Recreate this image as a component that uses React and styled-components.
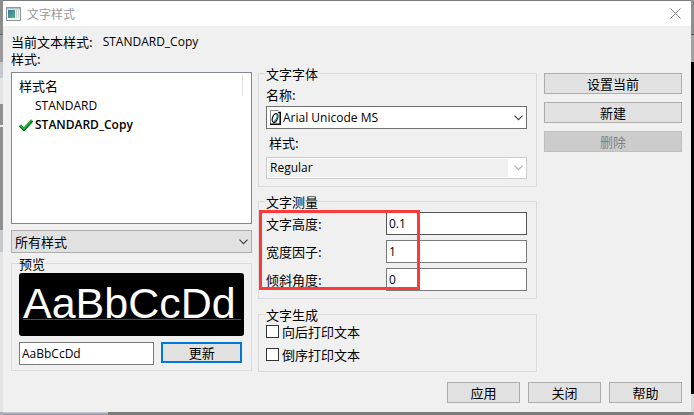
import React, { useState } from "react";
import styled, { createGlobalStyle } from "styled-components";

const GlobalStyle = createGlobalStyle`
  * {
    box-sizing: border-box;
  }
  body {
    margin: 0;
    font-family: "Open Sans", "Noto Sans CJK SC", sans-serif;
    font-size: 12px;
    line-height: 17px;
    color: #000;
  }
  :lang(zh) {
    font-family: "Noto Sans CJK SC", sans-serif;
    font-size: 13px;
  }
  button, input, select {
    font: inherit;
    color: inherit;
    margin: 0;
  }
`;

const Desktop = styled.div`
  min-height: 100vh;
  padding: 1px 3px 3px;
  background:
    linear-gradient(#8f8f8f 0 34px, #555 34px 35px, #a3a3a3 35px 62px, #000 62px 394px, #d8d8d8 394px 412px, #8a8a8a 412px) right / 3px 100% no-repeat,
    linear-gradient(#8c8c8c 0 34px, #666 34px 35px, #9a9a9a 35px 62px, #c4c8cc 62px 78px, #e4e4e4 78px 104px, #8f8f8f 104px 125px, #eee 125px 127px, #8f8f8f 127px 230px, #c4c8cc 230px 252px, #e4e4e4 252px 412px, #a8adb8 412px) left / 3px 100% no-repeat,
    linear-gradient(#d0d0d8, #8a8c98) left bottom / 108px 3px no-repeat,
    #7c7c7c;
`;

const Dialog = styled.main`
  display: flex;
  flex-direction: column;
  min-height: calc(100vh - 4px);
  background: #f0f0f0;
`;

const TitleBar = styled.header`
  display: flex;
  align-items: center;
  gap: 6px;
  height: 25px;
  padding: 0 10px 0 3px;
  background: #fff;
  color: #999;
`;

const Title = styled.h1`
  flex: 1;
  margin: 0;
  font-size: 12px;
  font-weight: 400;
`;

const CloseButton = styled.button`
  display: flex;
  padding: 0;
  border: none;
  background: none;
`;

const Content = styled.div`
  flex: 1;
  display: flex;
  flex-direction: column;
  padding: 7px 9px 8px 8px;
`;

const Current = styled.div`
  display: flex;
  gap: 10px;
`;

const Columns = styled.div`
  display: grid;
  grid-template-columns: 241fr 279fr 139fr;
  gap: 6px;
`;

const Column = styled.div`
  display: flex;
  flex-direction: column;
  min-width: 0;
  padding-top: ${({ $top }) => $top || 0}px;
`;

const StyleList = styled.section`
  height: 152px;
  margin: 5px 0 6px;
  padding: 1px 8px 1px 7px;
  background: #fff;
  border: 1px solid #828790;
`;

const ListHeader = styled.div`
  height: 22px;
  padding-top: 3px;
  border-right: 1px solid #e2e2e2;
`;

const StyleItem = styled.div`
  display: flex;
  align-items: center;
  gap: 2px;
  height: 19px;
  font-weight: ${({ $active }) => ($active ? 600 : 400)};
`;

const Mark = styled.span`
  display: flex;
  width: 14px;
`;

const SelectWrap = styled.div`
  display: grid;
  align-items: center;
  & > * {
    grid-area: 1 / 1;
  }
  & > svg {
    pointer-events: none;
  }
`;

const Select = styled.select`
  appearance: none;
  width: 100%;
  height: ${({ $tall }) => ($tall ? "23px" : "22px")};
  padding: 0 20px 1px ${({ $icon }) => ($icon ? "16px" : "3px")};
  border: 1px solid ${({ $filled }) => ($filled ? "#adadad" : "#707070")};
  border-radius: 0;
  background: ${({ $filled }) => ($filled ? "#e1e1e1" : "#fff")};
  &:disabled {
    border-color: #ccc;
    opacity: 1;
    color: #000;
    background: linear-gradient(#f0f0f0, #f0f0f0) 1px 1px / calc(100% - 19px) calc(100% - 2px) no-repeat #fff;
  }
`;

const Chevron = styled.svg`
  justify-self: end;
  margin-right: 4px;
`;

const FontGlyph = styled.svg`
  margin-left: 4px;
`;

const Group = styled.fieldset`
  position: relative;
  min-width: 0;
  margin: ${({ $top }) => $top || 0}px 0 ${({ $gap }) => $gap || 0}px;
  padding: 0 9px ${({ $bottom }) => $bottom || 7}px 7px;
  border: 1px solid #dcdcdc;
`;

const Legend = styled.legend`
  padding: 0;
`;

const Preview = styled.div`
  height: 63px;
  margin: 1px -2px 0 0;
  padding: 0 4px;
  border-radius: 3px;
  background: linear-gradient(#f00, #f00) 4px 46px / calc(100% - 7px) 1px no-repeat #000;
  color: #fff;
  font: 43px/61px "Liberation Sans", Arial, sans-serif;
  white-space: nowrap;
`;

const PreviewRow = styled.div`
  display: grid;
  grid-template-columns: 136fr 81fr;
  gap: 7px;
  align-items: start;
  margin-top: 6px;
`;

const TextInput = styled.input`
  width: 100%;
  height: 23px;
  min-width: 0;
  padding: 0 2px 1px;
  border: 1px solid ${({ $dark }) => ($dark ? "#555" : "#7a7a7a")};
  background: #fff;
`;

const Button = styled.button`
  height: 21px;
  padding: 0;
  line-height: 17px;
  border: ${({ $primary }) => ($primary ? "2px solid #0078d7" : "1px solid #adadad")};
  background: #e1e1e1;
  &:disabled {
    border-color: #bfbfbf;
    background: #ccc;
    color: #838383;
  }
`;

const FieldLabel = styled.label`
  display: block;
  padding: ${({ $inset }) => ($inset ? "5px 0 6px 3px" : "4px 0 3px")};
`;

const Measure = styled.div`
  display: grid;
  grid-template-columns: 120fr 141fr;
  align-items: center;
  row-gap: 5px;
  padding-top: 2px;
`;

// red frame drawn over the measurement fields
const Highlight = styled.div`
  position: absolute;
  top: 0;
  left: 0;
  width: 161px;
  height: 80px;
  border: 3px solid #fb3a3a;
  pointer-events: none;
`;

const CheckRow = styled.label`
  display: flex;
  align-items: center;
  gap: 3px;
  height: 17px;
  margin-bottom: 6px;
`;

const Checkbox = styled.input`
  appearance: none;
  width: 13px;
  height: 13px;
  border: 1px solid #333;
  background: #fff;
  &:checked {
    box-shadow: inset 0 0 0 2px #fff;
    background: #333;
  }
`;

const Actions = styled.div`
  display: flex;
  flex-direction: column;
  gap: 8px;
  margin-left: 1px;
`;

const Footer = styled.footer`
  display: flex;
  justify-content: flex-end;
  gap: 8px;
  margin-top: 10px;
  & > button {
    width: 73px;
  }
`;

const Arrow = ({ color = "#444" }) => (
  <Chevron width="9" height="6" viewBox="0 0 9 6" aria-hidden="true">
    <path d="M.5 .7 4.5 4.7 8.5 .7" fill="none" stroke={color} strokeWidth="1.2" />
  </Chevron>
);

const AppIcon = () => (
  <svg width="15" height="14" viewBox="0 0 15 14" aria-hidden="true">
    <defs>
      <linearGradient id="screen" x2="1" y2="1">
        <stop offset="0" stopColor="#3c72a8" />
        <stop offset="1" stopColor="#55b878" />
      </linearGradient>
    </defs>
    <path d="M.5 .5h14v13H.5z" fill="#f4f6f6" stroke="#8e9698" />
    <path d="M1 1h13v1.500H1z" fill="#b9c0c2" />
    <path d="M2 3h7v8H2z" fill="url(#screen)" />
    <path d="M10 3h1v8h-1zM12 3h1v8h-1z" fill="#ccd2d4" />
  </svg>
);

const measures = [
  { id: "height", label: "文字高度:", value: "0.1" },
  { id: "width", label: "宽度因子:", value: "1" },
  { id: "angle", label: "倾斜角度:", value: "0" },
];

const App = () => {
  const [sample, setSample] = useState("AaBbCcDd");
  const [preview, setPreview] = useState("AaBbCcDd");

  return (
    <Desktop>
      <GlobalStyle />
      <Dialog>
        <TitleBar>
          <AppIcon />
          <Title lang="zh">文字样式</Title>
          <CloseButton aria-label="关闭">
            <svg width="11" height="11" viewBox="0 0 11 11">
              <path d="M.5 .5l10 10M10.500 .5l-10 10" stroke="#888" />
            </svg>
          </CloseButton>
        </TitleBar>
        <Content>
          <Current>
            <span lang="zh">当前文本样式:</span>
            <span>STANDARD_Copy</span>
          </Current>
          <Columns>
            <Column>
              <span lang="zh">样式:</span>
              <StyleList>
                <ListHeader lang="zh">样式名</ListHeader>
                <StyleItem>
                  <Mark />
                  STANDARD
                </StyleItem>
                <StyleItem $active>
                  <Mark>
                    <svg width="14" height="12" viewBox="0 0 14 12" aria-hidden="true">
                      <path d="M1 6.500l4 4 8-9" fill="none" stroke="#052" strokeWidth="3" />
                      <path d="M1 6l4 4 8-9" fill="none" stroke="#1c2" strokeWidth="1.500" />
                    </svg>
                  </Mark>
                  STANDARD_Copy
                </StyleItem>
              </StyleList>
              <SelectWrap>
                <Select $tall $filled lang="zh" aria-label="样式">
                  <option>所有样式</option>
                </Select>
                <Arrow />
              </SelectWrap>
              <Group $top={2} $bottom={5}>
                <Legend lang="zh">预览</Legend>
                <Preview>{preview}</Preview>
                <PreviewRow>
                  <TextInput
                    aria-label="预览"
                    value={sample}
                    onChange={(e) => setSample(e.target.value)}
                  />
                  <Button $primary lang="zh" onClick={() => setPreview(sample)}>
                    更新
                  </Button>
                </PreviewRow>
              </Group>
            </Column>
            <Column $top={15}>
              <Group $gap={6}>
                <Legend lang="zh">文字字体</Legend>
                <FieldLabel lang="zh" htmlFor="font-name">名称:</FieldLabel>
                <SelectWrap>
                  <Select id="font-name" $tall $icon>
                    <option>Arial Unicode MS</option>
                  </Select>
                  <FontGlyph width="11" height="15" viewBox="0 0 11 15" aria-hidden="true">
                    <path d="M.5 14V.5h8" fill="none" stroke="#888" />
                    <path d="M8 2.500h2.200v11.700H0" fill="none" stroke="#000" strokeWidth="1.500" />
                    <ellipse cx="5" cy="8" rx="2.500" ry="4.500" transform="rotate(20 5 8)" fill="none" stroke="#000" strokeWidth="1.200" />
                    <path d="M7 4.500q1 3-2.500 7" fill="none" stroke="#299" strokeWidth="1.400" />
                  </FontGlyph>
                  <Arrow />
                </SelectWrap>
                <FieldLabel lang="zh" htmlFor="font-style" $inset>样式:</FieldLabel>
                <SelectWrap>
                  <Select id="font-style" disabled>
                    <option>Regular</option>
                  </Select>
                  <Arrow color="#b0b0b0" />
                </SelectWrap>
              </Group>
              <Group $gap={7} $bottom={7}>
                <Legend lang="zh">文字测量</Legend>
                <Measure>
                  {measures.map(({ id, label, value }, i) => (
                    <React.Fragment key={id}>
                      <label lang="zh" htmlFor={id}>{label}</label>
                      <TextInput id={id} defaultValue={value} $dark={i === 0} />
                    </React.Fragment>
                  ))}
                </Measure>
                <Highlight />
              </Group>
              <Group $bottom={2}>
                <Legend lang="zh">文字生成</Legend>
                <CheckRow lang="zh">
                  <Checkbox type="checkbox" />
                  向后打印文本
                </CheckRow>
                <CheckRow lang="zh">
                  <Checkbox type="checkbox" />
                  倒序打印文本
                </CheckRow>
              </Group>
            </Column>
            <Column $top={23}>
              <Actions>
                <Button lang="zh">设置当前</Button>
                <Button lang="zh">新建</Button>
                <Button lang="zh" disabled>删除</Button>
              </Actions>
            </Column>
          </Columns>
          <Footer>
            <Button lang="zh">应用</Button>
            <Button lang="zh">关闭</Button>
            <Button lang="zh">帮助</Button>
          </Footer>
        </Content>
      </Dialog>
    </Desktop>
  );
};

export default App;
